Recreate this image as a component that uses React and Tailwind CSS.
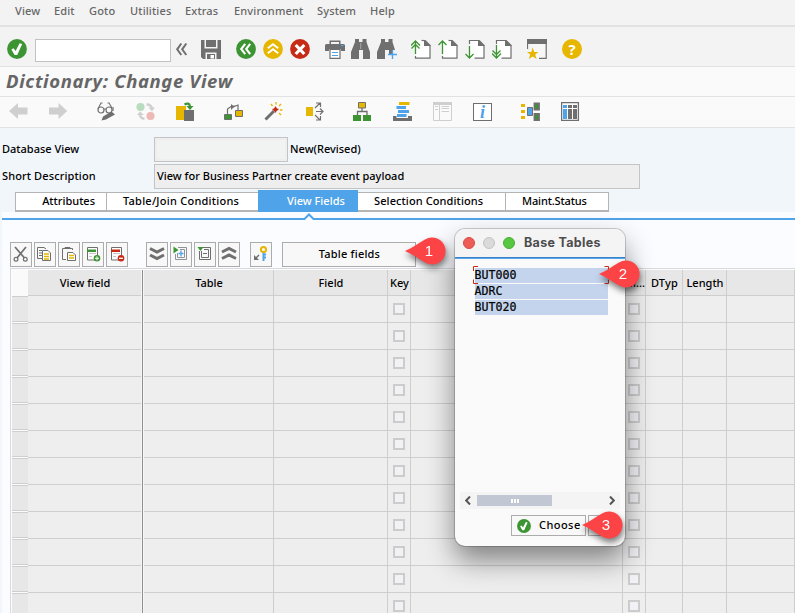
import React from "react";

const G = "#6f6f6f";
const GREEN = "#3c9432";
const GOLD = "#e6b600";
const RED = "#c52b16";
const BLUE = "#4fa3e8";

function Icon({ className = "", children }) {
  return (
    <svg viewBox="0 0 20 20" className={"h-5 w-5 shrink-0 " + className} fill="none">
      {children}
    </svg>
  );
}

function CheckCircle({ className }) {
  return (
    <svg viewBox="0 0 20 20" className={"shrink-0 " + className}>
      <circle cx="10" cy="10" r="9.9" fill={GREEN} />
      <path d="M4.4 10.5 6.6 9.3 8.6 12 12.6 4.2 15.2 4.9 10.2 16 7.6 16Z" fill="#fff" />
    </svg>
  );
}

function Page({ className, children, cut }) {
  return (
    <Icon className={className}>
      <path d="M5 1H14L19 6V19.5H5Z" fill="#fff" />
      <path d={cut ? "M4.5 5V1.5H13" : "M10.5 1.5H13"} stroke={G} strokeWidth="1.2" />
      <path d="M13 1H14.5L19.5 6V7H13Z" fill={G} />
      <path d={cut ? "M19 6V19.2H9.5" : "M19 6V19.2H4.5V17"} stroke={G} strokeWidth="1.2" />
      {children}
    </Icon>
  );
}

const menus = [
  ["View", "w-[39px]"],
  ["Edit", "w-[35px]"],
  ["Goto", "w-[41px]"],
  ["Utilities", "w-[55px]"],
  ["Extras", "w-[49px]"],
  ["Environment", "w-[83px]"],
  ["System", "w-[53px]"],
  ["Help", "w-[40px]"],
];

function StandardToolbar() {
  return (
    <div className="flex h-[39px] items-start bg-[#f3f3f3] pl-[7px] pt-3">
      <CheckCircle className="h-5 w-5" />
      <div className="ml-2 h-[23px] w-[136px] border border-[#c2c2c2] bg-white" />
      <Icon className="ml-[4px]">
        <path d="M6.3 4.5 2.2 10.3 6.3 16M11.3 4.5 7.2 10.3 11.3 16" stroke={G} strokeWidth="2" />
      </Icon>
      <Icon className="ml-[6px]">
        <path d="M0 1H3.5V9.5H16.5V1H20V20H15.5V13.5H4.5V20H2L0 18Z" fill={G} />
        <path d="M5 1H15V8H5ZM6 15H14V20H6Z" fill={G} />
        <path d="M9.5 16H13V19.5H9.5Z" fill="#fff" />
      </Icon>
      <Icon className="ml-[15px]">
        <circle cx="10" cy="10" r="9.9" fill={GREEN} />
        <path d="M9.2 4.8 5.2 10 9.2 15.2M14.2 4.8 10.2 10 14.2 15.2" stroke="#fff" strokeWidth="2.1" />
      </Icon>
      <Icon className="ml-[7px]">
        <circle cx="10" cy="10" r="9.9" fill={GOLD} />
        <path d="M4.8 9.3 10 5.3 15.2 9.3M4.8 14.2 10 10.2 15.2 14.2" stroke="#fff" strokeWidth="2" />
      </Icon>
      <Icon className="ml-[7px]">
        <circle cx="10" cy="10" r="9.9" fill={RED} />
        <path d="M5.7 6 14.3 15M14.3 6 5.7 15" stroke="#fff" strokeWidth="3.2" />
      </Icon>
      <Icon className="ml-[15px]">
        <path d="M4.5 1.5H15.5V5H18.5Q20 5 20 6.5V12H16V10H4V12H0V6.5Q0 5 1.5 5H4.5Z" fill={G} />
        <path d="M6 3H14V5H6Z" fill="#f3f3f3" />
        <path d="M16 6.5H18.5" stroke={BLUE} strokeWidth="1.3" />
        <path d="M5 10.5H15V19.3H5Z" fill="#fff" stroke={G} strokeWidth="1.2" />
        <path d="M7 13.5H13M7 16.5H13" stroke={BLUE} strokeWidth="1.2" />
      </Icon>
      <Icon className="ml-[6px]">
        <path d="M4 0H8V3H11.5V0H15.5V3L19 13V20H12V11H8V20H0V13L4 3Z" fill={G} />
        <path d="M9.7 4V10" stroke="#aaa" />
      </Icon>
      <Icon className="ml-[6px]">
        <path d="M4 0H8V3H11.5V0H15.5V3L18 11H15V15H12V11H8V20H0V13L4 3Z" fill={G} />
        <path d="M15.5 11V20M11 15.5H20" stroke={BLUE} strokeWidth="1.4" />
      </Icon>
      <Page className="ml-[14px]">
        <path d="M4.5 15V2M0 6.5 4.5 2 9 6.5M0.5 9.5 4.5 5.5 8.5 9.5" stroke={GREEN} strokeWidth="1.3" />
      </Page>
      <Page className="ml-[7px]">
        <path d="M4.5 15V2M0.5 6 4.5 2 8.5 6" stroke={GREEN} strokeWidth="1.3" />
      </Page>
      <Page className="ml-[7px]" cut>
        <path d="M4.5 7V19M0.5 15 4.5 19 8.5 15" stroke={GREEN} strokeWidth="1.3" />
      </Page>
      <Page className="ml-[7px]" cut>
        <path d="M4.5 6V19M0 14.5 4.5 19 9 14.5M0.5 11.5 4.5 15.5 8.5 11.5" stroke={GREEN} strokeWidth="1.3" />
      </Page>
      <Icon className="ml-[15px]">
        <path d="M.5 1H19V19H10Z" fill="#f7f7f7" />
        <path d="M0 0H20V5H0Z" fill={G} />
        <path d="M.5 5V10M19.2 4V19.3H12" stroke={G} strokeWidth="1.2" />
        <path d="M5.7 8.5 7.2 13H11.5L8.2 15.6 9.6 20 5.7 17.4 1.8 20 3.2 15.6 0 13H4.3Z" fill={GOLD} />
      </Icon>
      <div className="ml-[15px] flex h-5 w-5 items-center justify-center rounded-full bg-[#e6b600] font-['Open_Sans',sans-serif] text-[15px] font-bold leading-5 text-white">
        ?
      </div>
    </div>
  );
}

function ApplicationToolbar() {
  return (
    <div className="flex h-[30px] items-start bg-[#fafafa] pl-[9px] pt-[5px]">
      <Icon>
        <path d="M0 9 9 1V5.5H18.5V12.500H9V17Z" fill="#cfcfcf" />
      </Icon>
      <Icon className="ml-[19px]">
        <path d="M19.3 9 10.5 1V5.5H1V12.500H10.5V17Z" fill="#cfcfcf" />
      </Icon>
      <Icon className="ml-[29px]">
        <path d="M.8 7 4 1H5.5M15 6 12 1H10.5M7 7H9" stroke={G} strokeWidth="1.1" />
        <circle cx="4" cy="8" r="3" stroke={G} strokeWidth="1.2" />
        <circle cx="12" cy="8" r="3" stroke={G} strokeWidth="1.2" />
        <path d="M16 5V9" stroke={G} strokeWidth="1.2" />
        <path d="M4.500 18.5 6 14.5 14.5 9.5 18 12.5 9 17.5Z" fill={G} />
      </Icon>
      <Icon className="ml-[19px]">
        <circle cx="4.5" cy="5" r="4.1" fill="#b9dcc0" />
        <circle cx="14.5" cy="14" r="4.1" fill="#ecb9b7" />
        <path d="M10.5 2.5Q15.5 2.5 16 7" stroke="#d0d0d0" strokeWidth="2.5" />
        <path d="M12.5 5.5H19L16 9.5ZM1 13H8L4 9.5Z" fill="#d0d0d0" />
        <path d="M3.8 12Q4 16.5 8.5 16.8" stroke="#d0d0d0" strokeWidth="2.5" />
      </Icon>
      <Icon className="ml-5">
        <path d="M0 4H10V18H0Z" fill={GOLD} />
        <path d="M8 8H18V19H8Z" fill={G} />
        <path d="M8.5 2.5Q13 0 14 4" stroke={GREEN} strokeWidth="2.2" />
        <path d="M10.5 4H17.5L14 8Z" fill={GREEN} />
      </Icon>
      <Icon className="ml-[28px]">
        <path d="M3.5 12V7L7 4.5M10 4.5 14 3V8" stroke={G} strokeWidth="1.2" />
        <path d="M7 2V8L9 6 12 4 9 3.5Z" fill={G} />
        <path d="M.5 12.5H7.5V17.5H.5Z" fill={GREEN} stroke={G} />
        <path d="M11.5 8.5H18.5V14.5H11.5Z" fill={GOLD} stroke={G} />
      </Icon>
      <Icon className="ml-5">
        <path d="M1.5 17.5 10 9" stroke={G} strokeWidth="3" />
        <path d="M8.5 7.5H14.5M11.5 4.5V10.5" stroke={RED} strokeWidth="1.4" />
        <circle cx="11.5" cy="7.5" r="2" fill={RED} />
        <path d="M7 2 8.5 4M12 0V2.5M17 2 15 4M16 8H18.5M15 11 17 13" stroke={GOLD} strokeWidth="1.3" />
      </Icon>
      <Icon className="ml-[22px]">
        <path d="M0 5H7V14H0Z" fill={GOLD} />
        <path d="M9 6 14 1M10 1H14.5V5M10 9.5H17M14 6.5 17 9.5 14 12.5M9 13 14 18M10 18H14.5V14" stroke={G} strokeWidth="1.2" />
      </Icon>
      <Icon className="ml-[27px]">
        <path d="M9 6V10M4.5 14V9.5H14V14" stroke={G} strokeWidth="1.3" />
        <path d="M5.5.5H12.5V6H5.5Z" fill={GOLD} stroke={G} />
        <path d="M0 13H8V19H0ZM10 13H18V19H10Z" fill={GREEN} />
      </Icon>
      <Icon className="ml-5">
        <path d="M6 0H16.5V3H6Z" fill={GOLD} />
        <path d="M3.5 4H13V7H3.5ZM5 8H16V11H5ZM4 12H13.5V15H4Z" fill={BLUE} />
        <path d="M0 14H3.5V16H15V14H19V19H0Z" fill={G} />
      </Icon>
      <Icon className="ml-5">
        <path d="M.5.5H18.5V18.5H.5ZM6.5 3V18" stroke="#cfcfcf" />
        <path d="M0 0H19V3H0Z" fill="#cfcfcf" />
        <path d="M2 4.5H5M2 7.5H5M8.5 4.5H16M8.5 6.5H16M8.5 9.5H16" stroke="#cfcfcf" />
      </Icon>
      <div className="ml-5 mt-[1px] flex h-[18px] w-[19px] items-center justify-center border border-[#6f6f6f] bg-white font-['Liberation_Serif',serif] text-[18px] font-bold italic leading-none text-[#4fa3e8]">
        i
      </div>
      <Icon className="ml-[29px]">
        <path d="M0 2H4V5H0ZM0 8H4V11H0ZM0 14H4V17H0Z" fill={GOLD} />
        <path d="M6.5 5.5H11.5V13.5H6.5Z" fill={BLUE} stroke={G} />
        <path d="M13.5 1.5H18V7.5H13.5ZM13.5 12H18V18H13.5Z" fill={GREEN} stroke={G} strokeWidth="1.8" />
      </Icon>
      <Icon className="ml-5">
        <path d="M.6.6H17.4V18.4H.6Z" fill="#fff" stroke={G} strokeWidth="1.3" />
        <path d="M2 3H6V6H2ZM2 7H6V17H2Z" fill={BLUE} />
        <path d="M7 3H11V6H7ZM12 3H16V6H12ZM7 7H11V17H7ZM12 7H16V17H12Z" fill={G} />
      </Icon>
    </div>
  );
}

function TableButton({ className = "", children }) {
  return (
    <div className={"h-[25px] w-[22px] border border-[#acacac] bg-[#f8f8f8] " + className}>
      <svg viewBox="0 0 20 23" className="h-[23px] w-5" fill="none">
        {children}
      </svg>
    </div>
  );
}

function Doc() {
  return (
    <>
      <path d="M4.5 4.5H14.5V17H4.5Z" fill="#fff" stroke={G} />
      <path d="M6 10.500H13M6 13.500H9" stroke="#c4c4c4" />
    </>
  );
}

function GridToolbar() {
  return (
    <div className="flex gap-[2px] pl-2 pt-[22px]">
      <TableButton>
        <path d="M4 4 13.5 15M15 4 6 15" stroke={G} strokeWidth="1.7" />
        <circle cx="5" cy="16.3" r="1.9" stroke={G} strokeWidth="1.2" />
        <circle cx="14.3" cy="16.3" r="1.9" stroke={G} strokeWidth="1.2" />
      </TableButton>
      <TableButton>
        <path d="M7 15.5H2.5V4.5H9L11 6" stroke={G} />
        <path d="M4 7.5H7M4 10H7M4 12.5H7" stroke={G} />
        <path d="M7.5 7.5H13L15.5 10V17.5H7.5Z" fill="#fff" stroke={G} />
        <path d="M9 11H14M9 13.5H14M9 16H14" stroke={GOLD} strokeWidth="1.5" />
      </TableButton>
      <TableButton>
        <path d="M7 16.5H3.5V5.5H13.5V7M6 5.5V4.5H11V5.5" stroke={G} />
        <path d="M8.5 9.5H14L16.5 12V17.5H8.5Z" fill="#fff" stroke={G} />
        <path d="M10 12.5H15M10 15H15" stroke={GOLD} strokeWidth="1.5" />
      </TableButton>
      <TableButton>
        <Doc />
        <path d="M4 6.500H13V9H4Z" fill={GREEN} />
        <circle cx="14" cy="15.300" r="3.300" fill={GREEN} />
        <path d="M14 13.300V17.300M12 15.300H16" stroke="#fff" />
      </TableButton>
      <TableButton>
        <Doc />
        <path d="M4 6.500H13V9H4Z" fill={RED} />
        <circle cx="14" cy="15.300" r="3.300" fill={RED} />
        <path d="M12 15.300H16" stroke="#fff" strokeWidth="1.300" />
      </TableButton>
      <TableButton className="ml-4">
        <path d="M3 5.5 10 9 17 5.5M3 12 10 15.5 17 12" stroke={G} strokeWidth="3" />
      </TableButton>
      <TableButton>
        <path d="M7 4.500H15.500V16.500H4.500V11M9 6.500H13.500V14.500H6.500V10" stroke="#8f9499" />
        <path d="M10 7.500V13.500M7.500 10.500H12.500" stroke={BLUE} strokeWidth="1.300" />
        <path d="M2.500 3.500 7.500 7 2.500 10.500Z" fill={GREEN} />
      </TableButton>
      <TableButton>
        <path d="M8 4.5H15.5V16.5H4.5V8M6.5 8V14.5H13.5V6.5H9M8 10.5H12" stroke={G} />
        <path d="M2.5 4H8.5L5.5 8Z" fill={GREEN} />
      </TableButton>
      <TableButton>
        <path d="M3 9 10 5.5 17 9M3 15.5 10 12 17 15.5" stroke={G} strokeWidth="3" />
      </TableButton>
      <TableButton className="ml-2">
        <path d="M12.500 9V18M15 11.500H12.500M15 14.500H12.500" stroke={BLUE} strokeWidth="2" />
        <circle cx="12.500" cy="6.500" r="2.600" stroke={GOLD} strokeWidth="2" />
        <path d="M3 12V17H8Z" fill={G} />
        <path d="M4.500 15.500 8 12" stroke={G} strokeWidth="1.500" />
      </TableButton>
      <div className="ml-2 h-[25px] w-[134px] border border-[#acacac] bg-[#f8f8f8] pl-[1px] text-center leading-[22px] tracking-[0.2px]">
        Table fields
      </div>
    </div>
  );
}

function Box() {
  return <span className="mt-[7px] block h-3 w-3 border-2 border-[#cccccc] bg-[#f1f1f6]" />;
}

const cols =
  "grid grid-cols-[16px_113px_3px_130px_114px_23px_212px_23px_37px_44px_1fr]";

function Head({ children, className = "" }) {
  return (
    <div className={"overflow-hidden whitespace-nowrap border-b border-r border-[#cecece] bg-[#e7e7e7] pl-[1px] text-center leading-[26px] " + className}>
      {children}
    </div>
  );
}

function Cell({ children, className = "" }) {
  return (
    <div className={"flex justify-center border-b border-r border-[#cecece] bg-[#eeeeee] " + className}>{children}</div>
  );
}

function Divider() {
  return <div className="border-x border-[#f6f6f6] bg-[#8f8f8f]" />;
}

function FieldTable() {
  return (
    <div className="ml-2 mt-[1px] border-l border-t border-[#dadada] pl-[1px] pt-[1px]">
      <div className={cols + " h-[26px]"}>
        <div className="bg-[#fafafa]" />
        <Head className="border-r-0">View field</Head>
        <Divider />
        <Head>Table</Head>
        <Head>Field</Head>
        <Head>Key</Head>
        <Head />
        <Head className="flex justify-end">M...</Head>
        <Head className="tracking-[0.2px]">DTyp</Head>
        <Head>Length</Head>
        <Head />
      </div>
      {Array.from({ length: 12 }, (_, i) => (
        <div key={i} className={cols + " h-[27px]"}>
          <div className="mb-[1px] border-y border-[#cecece] bg-[#e7e7e7]" />
          <Cell className="border-r-0" />
          <Divider />
          <Cell />
          <Cell />
          <Cell>
            <Box />
          </Cell>
          <Cell />
          <Cell>
            <Box />
          </Cell>
          <Cell />
          <Cell />
          <Cell />
        </div>
      ))}
    </div>
  );
}

function Marker({ n, className }) {
  return (
    <div className={"absolute h-7 w-[42px] drop-shadow-[1px_4px_3px_rgba(0,0,0,0.5)] " + className}>
      <svg viewBox="0 0 42 28" className="absolute inset-0 h-full w-full">
        <path d="M0 14C7 11 14 6 20 2.500A13.500 13.500 0 1 1 20 25.500C14 22 7 17 0 14Z" fill="#fc4446" />
      </svg>
      <span className="relative block pl-[6px] text-center font-['Liberation_Sans',sans-serif] text-[15px] font-normal leading-7 text-white">{n}</span>
    </div>
  );
}

function Dialog() {
  return (
    <div className="absolute left-[455px] top-[229px] flex h-[317px] w-[170px] flex-col overflow-visible rounded-[10px] bg-[#fafafa] shadow-[0_0_0_1px_rgba(0,0,0,0.18),0_14px_28px_rgba(0,0,0,0.46)]">
      <div className="flex h-[28px] shrink-0 items-center rounded-t-[10px] bg-[#f4f4f4] pl-2">
        <span className="h-3 w-3 shrink-0 rounded-full border border-[#d84a48] bg-[#ee5c57]" />
        <span className="ml-2 h-3 w-3 shrink-0 rounded-full border border-[#c4c4c4] bg-[#dadada]" />
        <span className="ml-2 h-3 w-3 shrink-0 rounded-full border border-[#48ad35] bg-[#58c740]" />
        <span className="ml-[9px] whitespace-nowrap font-['Inter',sans-serif] text-[12.5px] font-bold leading-4 tracking-[0.32px] text-[#4c4c4c]">
          Base Tables
        </span>
      </div>
      <div className="h-[2px] shrink-0 border-t border-[#3c82c8] bg-[#55a6ea]" />
      <div className="mx-auto mt-[9px] flex w-[133px] translate-x-[1px] flex-col gap-[1px] font-['DejaVu_Sans_Mono',monospace] text-[11.6px] leading-[15px] text-black">
        {["BUT000", "ADRC", "BUT020"].map((t) => (
          <div key={t} className="h-[15px] bg-[#c4d4ec] [-webkit-text-stroke:0.2px_black]">
            {t}
          </div>
        ))}
      </div>
      <svg viewBox="0 0 138 20" className="absolute left-[18px] top-[37px] h-5 w-[138px]" fill="none">
        <path d="M5 .5H.5V5M.5 13.500V17.5H5M131.500 .5H135.500V5M135.500 13.500V17.5H131.500" stroke={RED} />
      </svg>
      <div className="mx-[5px] mt-auto flex h-[17px] items-center bg-[#f4f4f4] px-[5px]">
        <svg viewBox="0 0 6 9" className="h-[9px] w-[6px]" fill="none">
          <path d="M5 .5 1.2 4.5 5 8.5" stroke="#555" strokeWidth="2" />
        </svg>
        <div className="ml-[6px] flex h-[11px] w-[75px] items-center justify-center gap-[1px] bg-[#c1c8d3]">
          <i className="h-1 w-[2px] bg-white" />
          <i className="h-1 w-[2px] bg-white" />
          <i className="h-1 w-[2px] bg-white" />
        </div>
        <svg viewBox="0 0 6 9" className="ml-auto h-[9px] w-[6px]" fill="none">
          <path d="M1 .5 4.8 4.5 1 8.5" stroke="#555" strokeWidth="2" />
        </svg>
      </div>
      <div className="mb-[10px] mt-[6px] flex gap-[2px] pl-14">
        <div className="flex h-[21px] w-[75px] items-center border border-[#acacac] bg-[#f8f8f8] pl-[5px]">
          <CheckCircle className="h-[14px] w-[14px]" />
          <span className="ml-2 tracking-[0.45px]">Choose</span>
        </div>
        <div className="h-[21px] w-7 border border-[#acacac] bg-[#f8f8f8]" />
      </div>
    </div>
  );
}

export default function App() {
  return (
    <div className="relative h-[613px] w-[795px] overflow-hidden bg-[#f0f6fa] font-['Noto_Sans',sans-serif] text-[11px] font-medium text-black">
      <div className="flex h-[27px] items-start border-b-2 border-[#e2e2e2] bg-[#f3f3f3] pl-[15px] pt-[3px] leading-4 tracking-[0.15px] text-[#666]">
        {menus.map(([m, c]) => (
          <span key={m} className={"whitespace-nowrap " + c}>
            {m}
          </span>
        ))}
      </div>
      <StandardToolbar />
      <div className="h-[31px] border-y border-[#e2e2e2] bg-[#fafafa] pl-[6px] text-[18.5px] font-bold italic leading-[28px] tracking-[0.63px] text-[#666]">
        Dictionary: Change View
      </div>
      <ApplicationToolbar />
      <div className="h-[65px] border-t border-[#e2e2e2] pt-[9px]">
        <div className="flex h-[27px] items-start pl-[2px] leading-6">
          <span className="w-[152px]">Database View</span>
          <span className="h-[25px] w-[134px] border border-[#c4c4c4] bg-[#f1f3f3] shadow-[inset_0_0_0_2px_#eeeeee]" />
          <span className="pl-[2px]">New(Revised)</span>
        </div>
        <div className="flex items-start pl-[2px] leading-6">
          <span className="w-[152px] tracking-[0.12px]">Short Description</span>
          <span className="h-[25px] w-[486px] border border-[#c4c4c4] bg-[#eeeeee] pl-[2px] leading-[22px]">
            View for Business Partner create event payload
          </span>
        </div>
      </div>
      <div className="flex h-[19px] items-start pl-[15px]">
        <div className="h-5 w-[92px] border border-b-2 border-[#b4b4b4] bg-white pr-[11px] text-right leading-4">Attributes</div>
        <div className="h-5 w-[151px] border-b-2 border-t border-[#b4b4b4] bg-white pl-4 leading-4 tracking-[0.24px]">Table/Join Conditions</div>
        <div className="-mt-[2px] h-[22px] w-[100px] bg-[#4fa3e8] pl-[29px] leading-[21px] text-white">View Fields</div>
        <div className="h-5 w-[148px] border-b-2 border-r border-t border-[#b4b4b4] bg-white pl-4 leading-4 tracking-[0.1px]">Selection Conditions</div>
        <div className="h-5 w-[103px] border-b-2 border-r border-t border-[#b4b4b4] bg-white pl-4 leading-4 tracking-[-0.15px]">Maint.Status</div>
      </div>
      <div className="ml-[2px] mt-[1px] h-[401px] bg-[#fafcff]">
        <div className="flex h-2 items-end">
          <div className="h-[2px] w-[301px] bg-[#4fa3e8]" />
          <svg viewBox="0 0 12 8" className="h-2 w-3" fill="none">
            <path d="M0 7H1.5L6 2.5 10.5 7H12" stroke={BLUE} strokeWidth="2" />
          </svg>
          <div className="h-[2px] flex-1 bg-[#4fa3e8]" />
        </div>
        <GridToolbar />
        <FieldTable />
      </div>
      <Dialog />
      <Marker n="1" className="left-[405px] top-[237px]" />
      <Marker n="2" className="left-[599px] top-[260px]" />
      <Marker n="3" className="left-[582px] top-[511px]" />
    </div>
  );
}
